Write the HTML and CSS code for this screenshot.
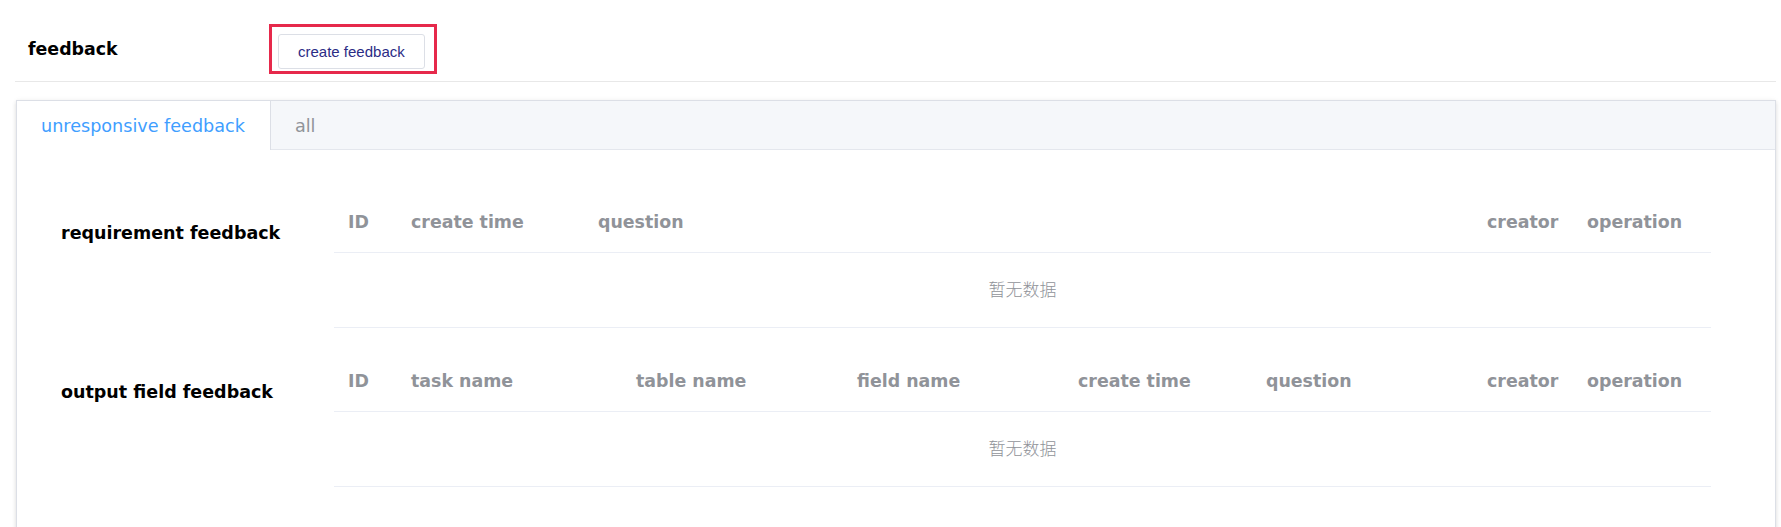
FILE: index.html
```html
<!DOCTYPE html>
<html lang="en">
<head>
<meta charset="utf-8">
<title>feedback</title>
<link rel="stylesheet" href="styles.css">
</head>
<body>
<div class="page">
  <div class="header">
    <div class="title">feedback</div>
    <div class="highlight">
      <button class="btn" type="button">create feedback</button>
    </div>
  </div>

  <div class="card">
    <div class="tabs">
      <div class="tab active">unresponsive feedback</div>
      <div class="tab">all</div>
    </div>
    <div class="content">
      <div class="section">
        <div class="label">requirement feedback</div>
        <div class="table">
          <div class="thead cols-req">
            <div class="th">ID</div>
            <div class="th">create time</div>
            <div class="th">question</div>
            <div class="th">creator</div>
            <div class="th">operation</div>
          </div>
          <div class="empty">暂无数据</div>
        </div>
      </div>
      <div class="section">
        <div class="label">output field feedback</div>
        <div class="table">
          <div class="thead cols-out">
            <div class="th">ID</div>
            <div class="th">task name</div>
            <div class="th">table name</div>
            <div class="th">field name</div>
            <div class="th">create time</div>
            <div class="th">question</div>
            <div class="th">creator</div>
            <div class="th">operation</div>
          </div>
          <div class="empty">暂无数据</div>
        </div>
      </div>
    </div>
  </div>
</div>
</body>
</html>
```

FILE: styles.css
```css
* { box-sizing: border-box; }

html, body {
  margin: 0;
  padding: 0;
  background: #ffffff;
  font-family: "DejaVu Sans", "Noto Sans CJK SC", sans-serif;
  overflow: hidden;
}

.page {
  padding: 0 5px 0 15px;
}

.header {
  display: flex;
  align-items: center;
  height: 82px;
  padding-top: 16px;
  border-bottom: 1px solid #e8e8e8;
}

.title {
  flex: none;
  width: 254px;
  padding-left: 13px;
  font-size: 17.4px;
  font-weight: bold;
  color: #000000;
}

.highlight {
  flex: none;
  border: 3px solid #e6294b;
  padding: 7px 9px 2px 6px;
}

.btn {
  display: block;
  height: 35px;
  padding: 0 19px;
  background: #ffffff;
  border: 1px solid #dcdfe6;
  border-radius: 3px;
  font-family: "Liberation Sans", Arial, sans-serif;
  font-size: 15px;
  color: #2c2c85;
  line-height: 33px;
}

.card {
  margin: 18px 0 0 1px;
  border: 1px solid #dcdfe6;
  box-shadow: 0 2px 4px 0 rgba(0, 0, 0, 0.12), 0 0 6px 0 rgba(0, 0, 0, 0.04);
  background: #ffffff;
}

.tabs {
  display: flex;
  height: 49px;
  background: #f5f7fa;
  border-bottom: 1px solid #e4e7ed;
}

.tab {
  height: 48px;
  line-height: 50px;
  padding: 0 25px 0 24px;
  font-size: 17.6px;
  color: #909399;
}

.tab.active {
  height: 49px;
  background: #ffffff;
  color: #409eff;
  border-right: 1px solid #dcdfe6;
}

.content {
  padding: 43px 64px 80px 44px;
  display: flex;
  flex-direction: column;
  gap: 24px;
}

.section {
  display: flex;
}

.label {
  flex: none;
  width: 273px;
  padding-top: 28px;
  line-height: 24px;
  font-size: 17.5px;
  font-weight: bold;
  color: #000000;
}

.table {
  flex: 1;
}

.thead {
  display: grid;
  height: 60px;
  padding-bottom: 2px;
  border-bottom: 1px solid #ebeef5;
  align-items: center;
}

.cols-req {
  grid-template-columns: 63px 187px 1fr 100px 138px;
}

.cols-out {
  grid-template-columns: 63px 225px 221px 221px 188px 221px 100px 138px;
}

.th {
  padding-left: 14px;
  font-size: 17.4px;
  font-weight: bold;
  color: #909399;
  white-space: nowrap;
}

.empty {
  height: 75px;
  padding-bottom: 4px;
  border-bottom: 1px solid #ebeef5;
  display: flex;
  align-items: center;
  justify-content: center;
  font-family: "Noto Sans CJK SC", sans-serif;
  font-weight: 300;
  font-size: 17px;
  color: #909399;
}
```
